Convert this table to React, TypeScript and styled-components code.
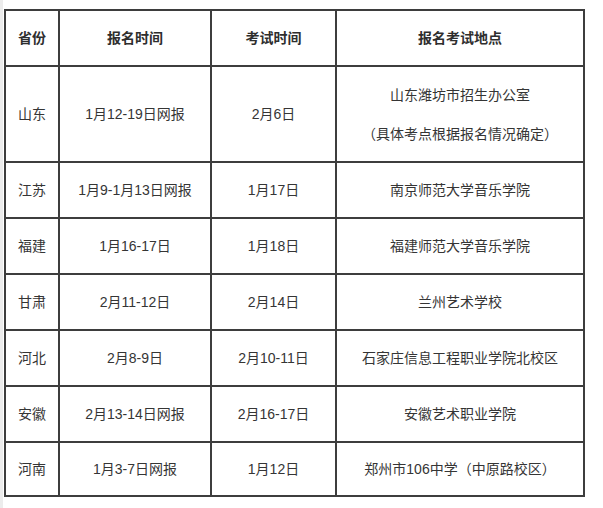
import React from "react";
import styled, { createGlobalStyle } from "styled-components";

const GlobalStyle = createGlobalStyle`
  html, body {
    margin: 0;
    padding: 0;
    background: #ffffff;
  }
  body {
    font-family: "Liberation Sans", "Noto Sans CJK SC", Arial, sans-serif;
    color: #333333;
  }
`;

const Page = styled.div`
  width: 603px;
  height: 508px;
  box-sizing: border-box;
  border-left: 3px solid #ececec;
  padding: 9px 0 0 1px;
  background: #ffffff;
`;

const Table = styled.table`
  border-collapse: separate;
  border-spacing: 0;
  border-top: 2px solid #3d3d3d;
  border-left: 2px solid #3d3d3d;
  table-layout: fixed;
`;

const Cell = styled.td<{ $w?: number; $h?: number; $head?: boolean }>`
  box-sizing: content-box;
  padding: 0;
  width: ${(p) => (p.$w ? `${p.$w}px` : "auto")};
  height: ${(p) => (p.$h ? `${p.$h}px` : "auto")};
  border-right: 2px solid #3d3d3d;
  border-bottom: 2px solid #3d3d3d;
  text-align: center;
  vertical-align: middle;
  font-size: 14px;
  line-height: 20px;
  font-weight: ${(p) => (p.$head ? 700 : 400)};
  color: ${(p) => (p.$head ? "#2e2e2e" : "#353535")};
  white-space: nowrap;
`;

const Lines = styled.div`
  display: flex;
  flex-direction: column;
  align-items: center;
  gap: 19px;
`;

const widths = [52, 150, 123, 246];

type Row = { prov: string; reg: string; exam: string; place: string[]; h: number };

const rows: Row[] = [
  {
    prov: "山东",
    reg: "1月12-19日网报",
    exam: "2月6日",
    place: ["山东潍坊市招生办公室", "（具体考点根据报名情况确定）"],
    h: 94,
  },
  { prov: "江苏", reg: "1月9-1月13日网报", exam: "1月17日", place: ["南京师范大学音乐学院"], h: 54 },
  { prov: "福建", reg: "1月16-17日", exam: "1月18日", place: ["福建师范大学音乐学院"], h: 54 },
  { prov: "甘肃", reg: "2月11-12日", exam: "2月14日", place: ["兰州艺术学校"], h: 54 },
  { prov: "河北", reg: "2月8-9日", exam: "2月10-11日", place: ["石家庄信息工程职业学院北校区"], h: 54 },
  { prov: "安徽", reg: "2月13-14日网报", exam: "2月16-17日", place: ["安徽艺术职业学院"], h: 54 },
  { prov: "河南", reg: "1月3-7日网报", exam: "1月12日", place: ["郑州市106中学（中原路校区）"], h: 52 },
];

const headers = ["省份", "报名时间", "考试时间", "报名考试地点"];

export default function App() {
  return (
    <>
      <GlobalStyle />
      <Page>
        <Table>
          <thead>
            <tr>
              {headers.map((h, i) => (
                <Cell as="th" key={h} $w={widths[i]} $h={54} $head>
                  {h}
                </Cell>
              ))}
            </tr>
          </thead>
          <tbody>
            {rows.map((r) => (
              <tr key={r.prov}>
                <Cell $w={widths[0]} $h={r.h}>{r.prov}</Cell>
                <Cell $w={widths[1]} $h={r.h}>{r.reg}</Cell>
                <Cell $w={widths[2]} $h={r.h}>{r.exam}</Cell>
                <Cell $w={widths[3]} $h={r.h}>
                  {r.place.length > 1 ? (
                    <Lines>
                      {r.place.map((p) => (
                        <span key={p}>{p}</span>
                      ))}
                    </Lines>
                  ) : (
                    r.place[0]
                  )}
                </Cell>
              </tr>
            ))}
          </tbody>
        </Table>
      </Page>
    </>
  );
}
